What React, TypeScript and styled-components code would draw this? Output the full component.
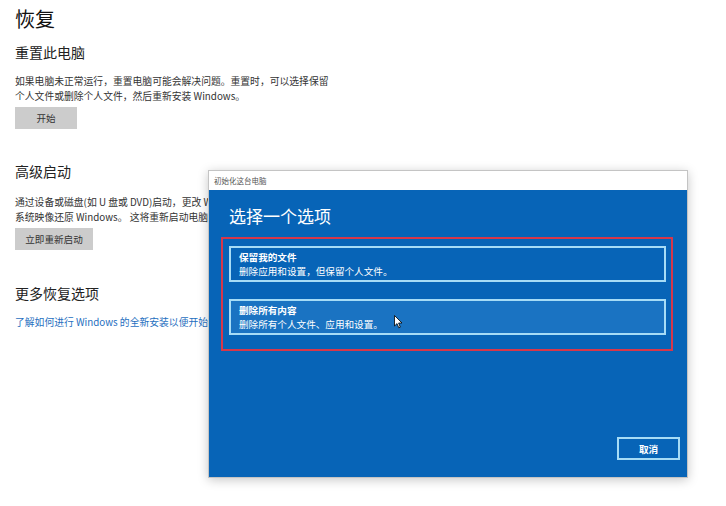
import React from "react";
import styled, { createGlobalStyle } from "styled-components";

const GlobalStyle = createGlobalStyle`
  html, body {
    margin: 0;
    padding: 0;
    background: #ffffff;
  }
  body {
    font-family: "Noto Sans CJK SC", "Noto Sans", "Liberation Sans", sans-serif;
    color: #1a1a1a;
  }
`;

// 设置页面
const Page = styled.div`
  position: relative;
  width: 726px;
  height: 506px;
  overflow: hidden;
  padding: 4px 15px 0;
  box-sizing: border-box;
`;

const PageTitle = styled.h1`
  margin: 0;
  font-size: 20px;
  line-height: 30px;
  font-weight: 400;
  color: #111;
`;

const SectionTitle = styled.h2<{ $top: number }>`
  margin: ${(p) => p.$top}px 0 0;
  font-size: 14px;
  line-height: 22px;
  font-weight: 400;
  color: #222;
`;

const Para = styled.p<{ $top: number }>`
  margin: ${(p) => p.$top}px 0 0;
  font-size: 9.8px;
  line-height: 14.5px;
  color: #333;
  white-space: nowrap;
`;

const GrayButton = styled.button<{ $w: number }>`
  display: block;
  margin-top: 4px;
  width: ${(p) => p.$w}px;
  height: 22px;
  border: none;
  background: #cccccc;
  color: #333;
  font-family: inherit;
  font-size: 9.6px;
  padding: 0;
`;

const Link = styled.a`
  display: block;
  margin-top: 11px;
  font-size: 9.8px;
  line-height: 15px;
  color: #1f6fc0;
  text-decoration: none;
  white-space: nowrap;
`;

// 弹出的对话框
const Dialog = styled.div`
  position: absolute;
  left: 208px;
  top: 170px;
  width: 480px;
  height: 308px;
  display: flex;
  flex-direction: column;
  border: 1px solid #c4c4c4;
  box-sizing: border-box;
  box-shadow: 0 2px 10px rgba(0, 0, 0, 0.22);
  background: #0764b7;
`;

const TitleBar = styled.div`
  height: 19px;
  background: #ffffff;
  display: flex;
  align-items: center;
  padding-left: 5px;
  font-size: 7.5px;
  color: #555;
`;

const DialogBody = styled.div`
  flex: 1;
  display: flex;
  flex-direction: column;
  padding: 0 14px 0 12px;
`;

const DialogHeading = styled.div`
  margin: 15px 0 10px 8px;
  font-size: 17px;
  line-height: 22px;
  color: #ffffff;
`;

const Highlight = styled.div`
  border: 2px solid #d7374a;
  padding: 7px 5px 14px 6px;
  display: flex;
  flex-direction: column;
  gap: 17px;
`;

const Option = styled.div<{ $hover?: boolean }>`
  height: 36px;
  box-sizing: border-box;
  border: 2px solid #a6dcf6;
  background: ${(p) => (p.$hover ? "#1a73c2" : "#0764b7")};
  padding: 2px 8px;
  color: #ffffff;
  position: relative;
`;

const OptionTitle = styled.div`
  font-size: 9.6px;
  line-height: 14px;
  font-weight: 700;
`;

const OptionText = styled.div`
  font-size: 9.6px;
  line-height: 14px;
`;

const Footer = styled.div`
  margin: auto -7px 17px 0;
  display: flex;
  justify-content: flex-end;
`;

const CancelButton = styled.button`
  width: 63px;
  height: 23px;
  border: 2px solid #a6dcf6;
  background: #0764b7;
  color: #ffffff;
  font-family: inherit;
  font-size: 9.6px;
  font-weight: 700;
  padding: 0;
`;

const Cursor = styled.svg`
  position: absolute;
  left: 163px;
  top: 14px;
`;

export default function App() {
  return (
    <>
      <GlobalStyle />
      <Page>
        <PageTitle>恢复</PageTitle>
        <SectionTitle $top={7}>重置此电脑</SectionTitle>
        <Para $top={11}>
          如果电脑未正常运行，重置电脑可能会解决问题。重置时，可以选择保留
          <br />
          个人文件或删除个人文件，然后重新安装 Windows。
        </Para>
        <GrayButton $w={62}>开始</GrayButton>

        <SectionTitle $top={31}>高级启动</SectionTitle>
        <Para $top={13}>
          通过设备或磁盘(如 U 盘或 DVD)启动，更改 Windows 启动设置，或者从
          <br />
          系统映像还原 Windows。 这将重新启动电脑。
        </Para>
        <GrayButton $w={78}>立即重新启动</GrayButton>

        <SectionTitle $top={32}>更多恢复选项</SectionTitle>
        <Link href="#">了解如何进行 Windows 的全新安装以便开始使用</Link>

        <Dialog>
          <TitleBar>初始化这台电脑</TitleBar>
          <DialogBody>
            <DialogHeading>选择一个选项</DialogHeading>
            <Highlight>
              <Option>
                <OptionTitle>保留我的文件</OptionTitle>
                <OptionText>删除应用和设置，但保留个人文件。</OptionText>
              </Option>
              <Option $hover>
                <OptionTitle>删除所有内容</OptionTitle>
                <OptionText>删除所有个人文件、应用和设置。</OptionText>
                <Cursor width="9" height="14" viewBox="0 0 9 14">
                  <path
                    d="M0.5 0.5 L0.5 11 L3 8.6 L4.8 12.8 L6.3 12.1 L4.6 8 L8 8 Z"
                    fill="#ffffff"
                    stroke="#000000"
                    strokeWidth="0.8"
                    strokeLinejoin="round"
                  />
                </Cursor>
              </Option>
            </Highlight>
            <Footer>
              <CancelButton>取消</CancelButton>
            </Footer>
          </DialogBody>
        </Dialog>
      </Page>
    </>
  );
}
